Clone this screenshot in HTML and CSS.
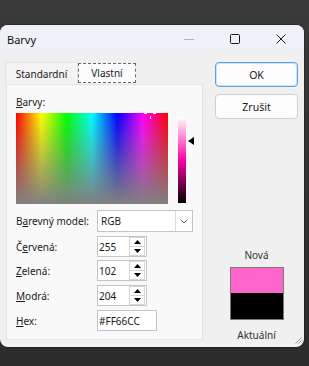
FILE: index.html
```html
<!DOCTYPE html>
<html lang="cs">
<head>
<meta charset="utf-8">
<title>Barvy</title>
<link rel="stylesheet" href="styles.css">
</head>
<body>
<div class="window">
  <div class="titlebar">
    <span class="title">Barvy</span>
    <div class="caption">
      <span class="cap"><svg width="10" height="10" viewBox="0 0 10 10"><path d="M0 5.5H10" stroke="#b4b4b4" stroke-width="1"/></svg></span>
      <span class="cap"><svg width="10" height="10" viewBox="0 0 10 10"><rect x="0.5" y="0.5" width="9" height="9" rx="1" fill="none" stroke="#1a1a1a" stroke-width="1"/></svg></span>
      <span class="cap"><svg width="10" height="10" viewBox="0 0 10 10"><path d="M0.5 0.5L9.5 9.5M9.5 0.5L0.5 9.5" stroke="#1a1a1a" stroke-width="1"/></svg></span>
    </div>
  </div>
  <div class="client">
    <div class="left">
      <div class="tabs">
        <div class="tab">Standardní</div>
        <div class="tab active"><span class="focus">Vlastní</span></div>
      </div>
      <div class="panel">
        <div class="label-top"><u>B</u>arvy:</div>
        <div class="picker">
          <div class="spectrum">
            <span class="cross ch-l"></span>
            <span class="cross ch-r"></span>
            <span class="cross ch-b"></span>
          </div>
          <div class="lum"></div>
          <div class="arrow-col"><svg width="6" height="8" viewBox="0 0 6 8"><path d="M0 4L6 0V8Z" fill="#000"/></svg></div>
        </div>
        <div class="form">
          <div class="row r-combo">
            <span class="lbl">B<u>a</u>revný model:</span>
            <div class="combo"><span class="val">RGB</span><span class="drop"><svg width="8" height="5" viewBox="0 0 8 5"><path d="M0.5 0.5L4 4L7.5 0.5" fill="none" stroke="#606060" stroke-width="1"/></svg></span></div>
          </div>
          <div class="row r-red">
            <span class="lbl">Č<u>e</u>rvená:</span>
            <div class="spin"><span class="val">255</span><span class="btns"><span class="sb"><svg width="7" height="4" viewBox="0 0 7 4"><path d="M3.5 0L7 4H0Z" fill="#000"/></svg></span><span class="sb down"><svg width="7" height="4" viewBox="0 0 7 4"><path d="M0 0H7L3.5 4Z" fill="#000"/></svg></span></span></div>
          </div>
          <div class="row r-green">
            <span class="lbl"><u>Z</u>elená:</span>
            <div class="spin"><span class="val">102</span><span class="btns"><span class="sb"><svg width="7" height="4" viewBox="0 0 7 4"><path d="M3.5 0L7 4H0Z" fill="#000"/></svg></span><span class="sb down"><svg width="7" height="4" viewBox="0 0 7 4"><path d="M0 0H7L3.5 4Z" fill="#000"/></svg></span></span></div>
          </div>
          <div class="row r-blue">
            <span class="lbl"><u>M</u>odrá:</span>
            <div class="spin"><span class="val">204</span><span class="btns"><span class="sb"><svg width="7" height="4" viewBox="0 0 7 4"><path d="M3.5 0L7 4H0Z" fill="#000"/></svg></span><span class="sb down"><svg width="7" height="4" viewBox="0 0 7 4"><path d="M0 0H7L3.5 4Z" fill="#000"/></svg></span></span></div>
          </div>
          <div class="row r-hex">
            <span class="lbl"><u>H</u>ex:</span>
            <div class="hex"><span class="val">#FF66CC</span></div>
          </div>
        </div>
      </div>
    </div>
    <div class="right">
      <div class="btn default">OK</div>
      <div class="btn">Zrušit</div>
      <div class="preview">
        <div class="pv-label">Nová</div>
        <div class="swatch"><div class="new"></div><div class="old"></div></div>
        <div class="pv-label after">Aktuální</div>
      </div>
    </div>
  </div>
  <svg class="grip" width="7" height="7" viewBox="0 0 7 7"><path d="M6.5 0.5L0.5 6.5M6.5 3.5L3.5 6.5" stroke="#9a9a9a" stroke-width="1"/></svg>
</div>
</body>
</html>
```
FILE: styles.css
```css
html, body {
  margin: 0;
  padding: 0;
}
body {
  width: 309px;
  height: 366px;
  overflow: hidden;
  background: linear-gradient(to bottom, #3a3a3a 0%, #333 40%, #2b2b2b 100%);
  font-family: "Noto Sans", "Open Sans", sans-serif;
  font-size: 10px;
  color: #1a1a1a;
  padding-top: 25px;
  box-sizing: border-box;
}
.window {
  position: relative;
  width: 304px;
  height: 322px;
  border-radius: 8px;
  overflow: hidden;
  background: #f0f0f0;
  display: flex;
  flex-direction: column;
  box-shadow: 0 0 0 1px rgba(0,0,0,0.25);
}
.titlebar {
  height: 28px;
  flex: none;
  display: flex;
  align-items: center;
  background: #eef1f5;
}
.title {
  padding-left: 7px;
  font-size: 11px;
  flex: 1;
  color: #111;
}
.caption {
  display: flex;
  height: 28px;
}
.cap {
  width: 46px;
  height: 28px;
  display: flex;
  align-items: center;
  justify-content: center;
}
.client {
  flex: 1;
  display: flex;
  gap: 12px;
  padding: 9px 6px 7px 5px;
  min-height: 0;
}
.left {
  width: 198px;
  display: flex;
  flex-direction: column;
}
.tabs {
  display: flex;
  height: 22px;
  align-items: stretch;
}
.tab {
  box-sizing: border-box;
  width: 73px;
  border: 1px solid #e3e3e3;
  border-bottom: none;
  background: #f3f3f3;
  display: flex;
  align-items: center;
  justify-content: center;
  padding-top: 1px;
}
.tab.active {
  width: 58px;
  margin-top: 1px;
  margin-bottom: 1px;
  background: #fbfbfb;
  border: 1px dashed #6a6a6a;
  padding-top: 0;
}
.panel {
  flex: 1;
  margin-left: 1px;
  background: #f9f9f9;
  border: 1px solid #e4e4e4;
  padding: 10px 0 0 9px;
}
.label-top {
  line-height: 14px;
  height: 14px;
}
.picker {
  display: flex;
  margin-top: 4px;
  align-items: flex-start;
}
.spectrum {
  position: relative;
  width: 152px;
  height: 91px;
  background:
    linear-gradient(to bottom, rgba(128,128,128,0), #808080),
    linear-gradient(to right, #f00, #ff0 16.7%, #0f0 33.3%, #0ff 50%, #00f 66.7%, #f0f 83.3%, #f00);
}
.cross {
  position: absolute;
  background: #fff;
}
.ch-l { left: 128px; top: 0; width: 3px; height: 1px; }
.ch-r { left: 137px; top: 0; width: 3px; height: 1px; }
.ch-b { left: 134px; top: 3px; width: 1px; height: 3px; }
.lum {
  width: 8px;
  height: 86px;
  margin-left: 10px;
  margin-top: 4px;
  background: linear-gradient(to bottom, hsl(320,100%,100%), hsl(320,100%,50%) 50%, hsl(320,100%,0%));
}
.arrow-col {
  margin-left: 2px;
  margin-top: 24px;
  height: 8px;
  display: flex;
}
.form {
  margin-top: 6px;
  display: flex;
  flex-direction: column;
}
.r-red { margin-top: 4px; }
.r-green { margin-top: 3px; }
.r-blue { margin-top: 4px; }
.r-hex { margin-top: 4px; }
.row {
  display: flex;
  align-items: center;
}
.lbl {
  width: 81px;
  flex: none;
}
.combo, .spin, .hex {
  box-sizing: border-box;
  background: #fff;
  border: 1px solid #c4c4c4;
  display: flex;
  align-items: center;
  height: 21px;
}
.combo {
  width: 96px;
  height: 22px;
}
.val {
  padding-left: 3px;
  flex: 1;
}
.drop {
  width: 16px;
  height: 20px;
  border-left: 1px solid #dcdcdc;
  display: flex;
  align-items: center;
  justify-content: center;
}
.spin {
  width: 50px;
}
.spin .val { padding-left: 1px; }
.btns {
  width: 16px;
  height: 19px;
  margin-right: 1px;
  border: 1px solid #d6d6d6;
  box-sizing: border-box;
  display: flex;
  flex-direction: column;
}
.sb {
  flex: 1;
  display: flex;
  align-items: center;
  justify-content: center;
}
.sb.down {
  border-top: 1px solid #d6d6d6;
}
.hex {
  width: 60px;
}
.hex .val { padding-left: 1px; }
.right {
  width: 83px;
  display: flex;
  flex-direction: column;
  align-items: center;
}
.btn {
  box-sizing: border-box;
  width: 83px;
  height: 25px;
  border: 1px solid #d0d0d0;
  border-radius: 4px;
  background: #fdfdfd;
  display: flex;
  align-items: center;
  justify-content: center;
  margin-bottom: 7px;
  font-size: 10.5px;
}
.btn.default {
  border-color: #5fa3dc;
  box-shadow: inset 0 0 0 1px #cfe3f5;
}
.preview {
  margin-top: auto;
  margin-bottom: -2px;
  display: flex;
  flex-direction: column;
  align-items: center;
}
.pv-label {
  line-height: 14px;
  color: #333;
}
.pv-label.after {
  margin-top: 8px;
}
.swatch {
  margin-top: 5px;
  width: 54px;
  height: 53px;
  box-sizing: border-box;
  border: 1px solid #7a7a7a;
  display: flex;
  flex-direction: column;
}
.new { height: 25px; background: #ff66cc; }
.old { flex: 1; background: #000; }
.grip {
  position: absolute;
  right: 2px;
  bottom: 3px;
}
```
